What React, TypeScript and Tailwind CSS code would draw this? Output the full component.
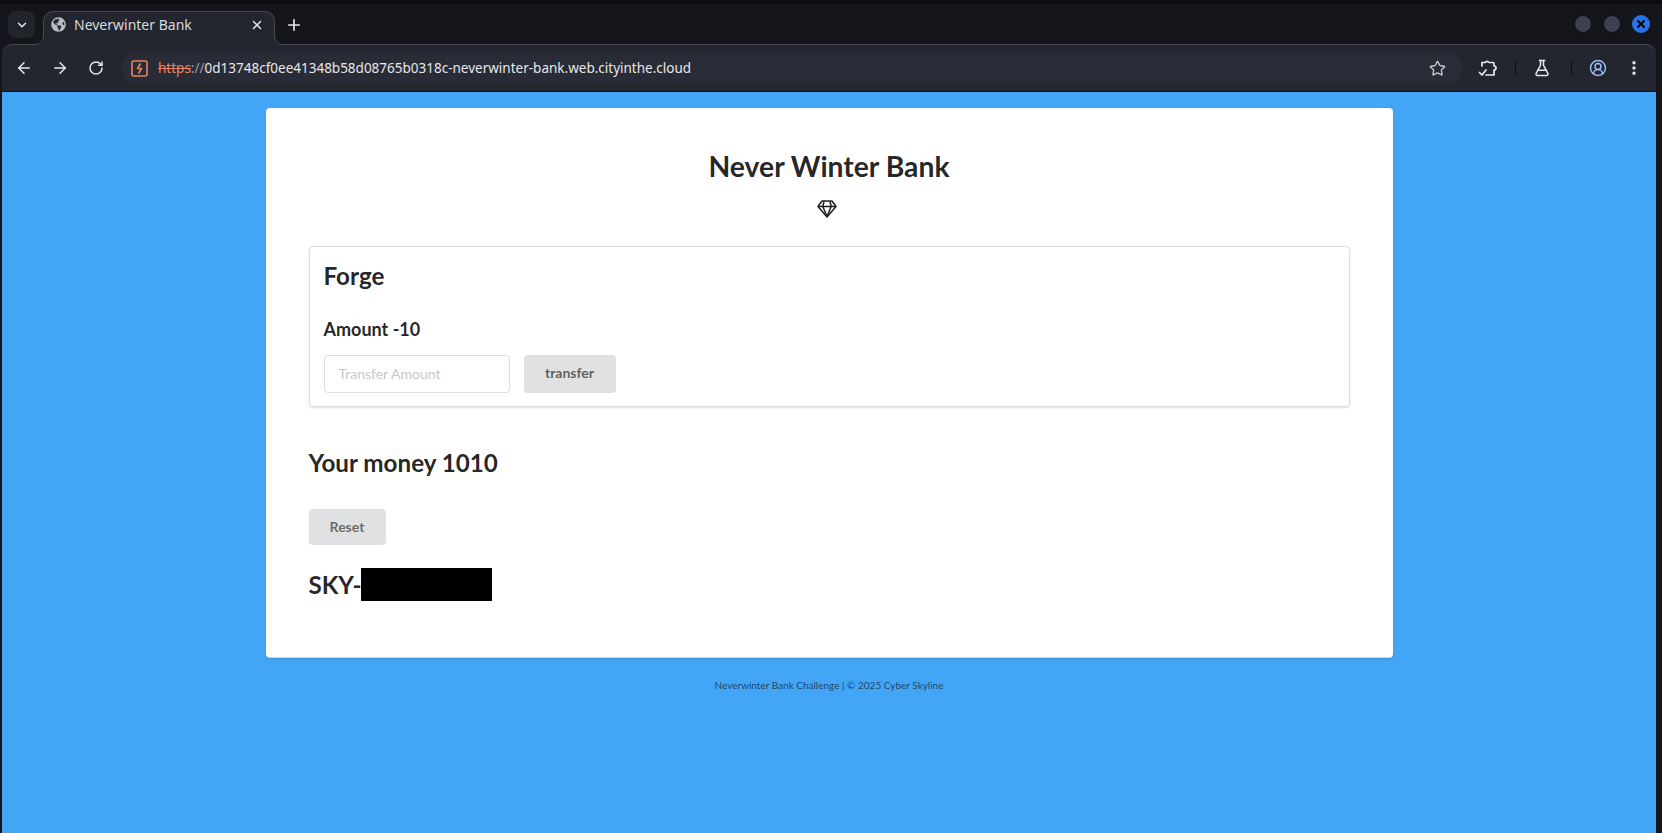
import { ArrowLeft, ArrowRight, ChevronDown, FlaskConical, MoreVertical, Plus, RotateCw, Star, UserCircle2, X } from "lucide-react";
import { FaGlobeAmericas } from "react-icons/fa";

const ExtensionIcon = () => (
  <svg width="20" height="20" viewBox="0 0 20 20" fill="none" stroke="#e6e7ea" strokeWidth="1.7" strokeLinejoin="round" strokeLinecap="round">
    <path d="M4 8V4.5h3.2a2 2 0 0 1 3.6 0H15a1 1 0 0 1 1 1V8a2 2 0 0 1 0 4v5H8" />
    <path d="M1.5 14.5 4 17l4-5" />
  </svg>
);

const GemIcon = () => (
  <svg width="20" height="18" viewBox="0 0 20 18" fill="none" stroke="#1f1f1f" strokeWidth="1.5" strokeLinejoin="round">
    <path d="M5 1h10l4 5.5L10 17 1 6.5z" />
    <path d="M1 6.5h18M7 1.5 5.8 6.5 10 16.5l4.2-10L13 1.5" />
  </svg>
);

const NotSecureIcon = () => (
  <svg width="17" height="17" viewBox="0 0 17 17" fill="none" stroke="#e8835f" strokeWidth="1.6" strokeLinejoin="round">
    <rect x="1" y="1" width="15" height="15" rx="2" />
    <path d="M9.5 3.5 6.5 8.5h4l-3 5" />
  </svg>
);

// the little curves that join the active tab to the toolbar
const TabFlare = ({ className, flip }: { className: string; flip?: boolean }) => (
  <svg className={className} width="9" height="9" viewBox="0 0 9 9" style={flip ? { transform: "scaleX(-1)" } : undefined}>
    <path d="M9 0v9H0a9 9 0 0 0 9-9z" fill="#23252f" />
    <path d="M0 8.5A8.5 8.5 0 0 0 8.5 0" fill="none" stroke="#474952" />
  </svg>
);

const BrowserChrome = () => (
  <div className="bg-[#15161b]">
    {/* Tab strip */}
    <div className="h-[44px] flex items-end pl-[8px] pr-[12px] border-t-4 border-[#0d0e11]">
      <div className="h-[27px] w-[27px] mb-[6px] rounded-lg bg-[#22242c] flex items-center justify-center">
        <ChevronDown className="w-[14px] h-[14px] text-[#e6e7ea]" strokeWidth={2.5} />
      </div>
      <div className="relative z-10 ml-[8px] -mb-px h-[34px] w-[232px] rounded-t-[10px] border border-b-0 border-[#474952] bg-[#23252f] flex items-center pl-[7px] pr-[10px] pb-[8px]">
        <TabFlare className="absolute -left-[9px] bottom-0" />
        <TabFlare className="absolute -right-[9px] bottom-0" flip />
        <FaGlobeAmericas className="w-[15px] h-[15px] text-[#b9bbc1]" />
        <span className="ml-[8px] text-[14px] text-[#d9dade] font-['Noto_Sans',sans-serif]">Neverwinter Bank</span>
        <X className="ml-auto w-[14px] h-[14px] text-[#e6e7ea]" strokeWidth={2.5} />
      </div>
      <Plus className="ml-[10px] mb-[10px] w-[18px] h-[18px] text-[#e6e7ea]" strokeWidth={2.2} />
      <div className="ml-auto mb-[8px] flex items-center gap-[11px] pb-[3px]">
        <div className="w-[18px] h-[18px] rounded-full bg-[#3c4150] border border-[#0d0e11]" />
        <div className="w-[18px] h-[18px] rounded-full bg-[#3c4150] border border-[#0d0e11]" />
        <div className="w-[18px] h-[18px] rounded-full bg-[#2a72e8] flex items-center justify-center">
          <X className="w-3 h-3 text-black" strokeWidth={4} />
        </div>
      </div>
    </div>
    {/* Toolbar */}
    <div className="ml-[2px] mr-[6px] h-[48px] rounded-t-[10px] border-t border-[#474952] border-b border-b-[#0d0e11] bg-[#23252f] flex items-center pl-[13px]">
      <ArrowLeft className="w-[18px] h-[18px] text-[#e6e7ea]" strokeWidth={2} />
      <ArrowRight className="ml-[18px] w-[18px] h-[18px] text-[#e6e7ea]" strokeWidth={2} />
      <RotateCw className="ml-[19px] w-[16px] h-[16px] text-[#e6e7ea]" strokeWidth={2.2} />
      <div className="ml-[18px] w-[1340px] h-[33px] rounded-full bg-[#292c37] flex items-center pl-[9px] pr-[16px]">
        <NotSecureIcon />
        <span className="ml-[10px] text-[13.5px] font-['Noto_Sans',sans-serif] text-[#e6e7ea] whitespace-nowrap">
          <span className="text-[#e8835f] line-through">https</span>
          <span className="text-[#9a9ca3]">://</span>
          0d13748cf0ee41348b58d08765b0318c-neverwinter-bank.web.cityinthe.cloud
        </span>
        <Star className="ml-auto w-[17px] h-[17px] text-[#c5c6cb]" strokeWidth={2} />
      </div>
      <div className="ml-[16px]">
        <ExtensionIcon />
      </div>
      <div className="ml-[17px] w-px h-[16px] bg-[#0d0e11]" />
      <FlaskConical className="ml-[17px] w-[18px] h-[18px] text-[#e6e7ea]" strokeWidth={2} />
      <div className="ml-[20px] w-px h-[16px] bg-[#0d0e11]" />
      <UserCircle2 className="ml-[17px] w-[18px] h-[18px] text-[#9cbdf0]" strokeWidth={2} />
      <MoreVertical className="ml-[18px] w-[18px] h-[18px] text-[#e6e7ea]" strokeWidth={2.5} />
    </div>
  </div>
);

const GreyButton = ({ label, className }: { label: string; className: string }) => (
  <button className={`rounded-[4px] bg-[#e0e1e2] text-[14px] font-bold ${className}`}>{label}</button>
);

export default function App() {
  return (
    <div className="h-screen overflow-hidden flex flex-col bg-[#15161b] font-['Lato',sans-serif]">
      <BrowserChrome />
      <main className="flex-1 ml-[2px] mr-[6px] bg-[#42a5f5] pt-[16px] flex flex-col items-center text-black/87">
        <div className="w-[1127px] h-[550px] bg-white rounded-[4px] border-b border-black/15 shadow-[0_1px_2px_rgba(34,36,38,0.15)] px-[43px] pt-[42px]">
          <h1 className="text-[28.3px] leading-[32px] font-bold text-center">Never Winter Bank</h1>
          <div className="mt-[18px] flex justify-center pr-[4px]">
            <GemIcon />
          </div>
          <section className="mt-[28px] h-[161px] rounded-[4px] border border-[rgba(34,36,38,0.15)] shadow-[0_1px_2px_rgba(34,36,38,0.15)] px-[14px] pt-[14px]">
            <h2 className="text-[24.2px] leading-[30px] font-bold">Forge</h2>
            <h3 className="mt-[27px] text-[18px] leading-[22px] font-bold">Amount -10</h3>
            <div className="mt-[15px] flex items-center gap-[14px]">
              <input
                placeholder="Transfer Amount"
                className="w-[186px] h-[38px] rounded-[4px] border border-[rgba(34,36,38,0.15)] px-[14px] pb-[1px] text-[14px] outline-none placeholder:text-[#c8c8c8]"
              />
              <GreyButton label="transfer" className="w-[92px] h-[38px] pb-[3px] text-black/60" />
            </div>
          </section>
          <h2 className="mt-[41px] text-[24.2px] leading-[30px] font-bold">Your money 1010</h2>
          <GreyButton label="Reset" className="mt-[31px] block w-[77px] h-[36px] pb-[1px] text-black/55" />
          <div className="mt-[23px] flex items-center h-[33px]">
            <h2 className="text-[24.2px] leading-[30px] font-bold">SKY-</h2>
            <div className="-ml-px w-[131px] h-[33px] bg-black" />
          </div>
        </div>
        <p className="mt-[21px] text-[10px] leading-[12px] text-black/60">Neverwinter Bank Challenge | © 2025 Cyber Skyline</p>
      </main>
    </div>
  );
}
